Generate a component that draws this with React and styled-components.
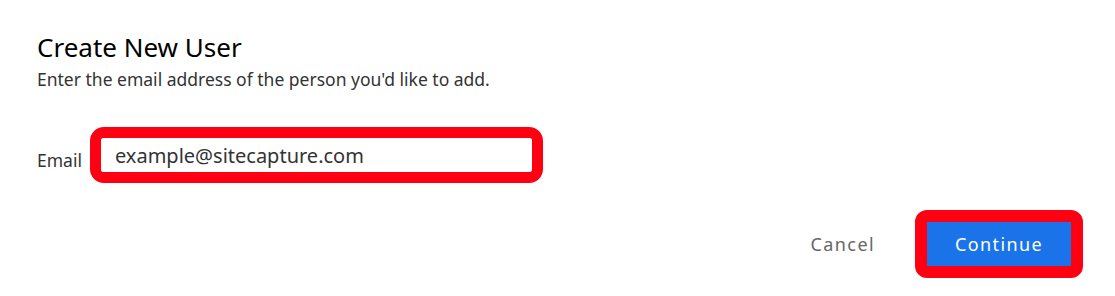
import React, { useState } from 'react';
import styled, { createGlobalStyle } from 'styled-components';

const Global = createGlobalStyle`
  body {
    margin: 0;
    background: #fff;
    font-family: "Noto Sans", "Open Sans", sans-serif;
  }
`;

const Dialog = styled.div`
  width: 1115px;
  height: 296px;
  box-sizing: border-box;
  padding: 30px 32px 0 37px;
  display: flex;
  flex-direction: column;
`;

const Title = styled.h2`
  margin: 0;
  font-size: 26px;
  font-weight: 400;
  line-height: 34px;
  color: #000;
`;

const Subtitle = styled.p`
  margin: 0;
  font-size: 17.5px;
  line-height: 30px;
  color: #333;
`;

const Field = styled.div`
  display: flex;
  align-items: center;
  gap: 8px;
  margin-top: 33px;
`;

const Label = styled.label`
  font-size: 17.5px;
  color: #333;
  margin-top: 9px;
`;

const Highlight = styled.div`
  border: 11px solid #ff0012;
  border-radius: 14px;
  display: flex;
`;

const Input = styled.input`
  width: 431px;
  height: 34px;
  box-sizing: border-box;
  border: none;
  border-radius: 3px;
  padding: 0 14px;
  font-family: inherit;
  font-size: 20px;
  color: #333;
  outline: none;
  background: #fff;
`;

const Actions = styled.div`
  display: flex;
  justify-content: flex-end;
  align-items: center;
  gap: 40px;
  margin-top: 27px;
`;

const Button = styled.button`
  font-family: inherit;
  font-size: 18px;
  letter-spacing: 1.4px;
  border: none;
  cursor: pointer;
  height: 44px;
  padding: ${p => (p.primary ? '0' : '0')};
  width: ${p => (p.primary ? '144px' : 'auto')};
  background: ${p => (p.primary ? '#1a73e8' : 'transparent')};
  color: ${p => (p.primary ? '#fff' : '#666')};
`;

const ButtonHighlight = styled.div`
  border: 12px solid #ff0012;
  border-radius: 12px;
  display: flex;
`;

const App = () => {
  const [email, setEmail] = useState('example@sitecapture.com');
  return (
    <>
      <Global />
      <Dialog>
        <Title>Create New User</Title>
        <Subtitle>Enter the email address of the person you'd like to add.</Subtitle>
        <Field>
          <Label htmlFor="email">Email</Label>
          <Highlight>
            <Input id="email" value={email} onChange={e => setEmail(e.target.value)} />
          </Highlight>
        </Field>
        <Actions>
          <Button type="button">Cancel</Button>
          <ButtonHighlight>
            <Button primary type="button">Continue</Button>
          </ButtonHighlight>
        </Actions>
      </Dialog>
    </>
  );
};

export default App;
